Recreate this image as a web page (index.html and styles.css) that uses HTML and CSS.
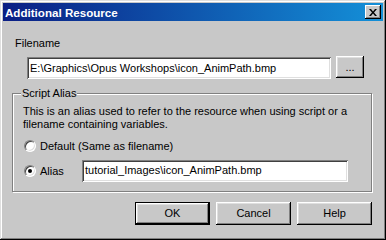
FILE: index.html
```html
<!DOCTYPE html>
<html>
<head>
<meta charset="utf-8">
<link rel="stylesheet" href="styles.css">
</head>
<body>
<div class="dialog">
  <div class="titlebar">
    <span class="title">Additional Resource</span>
    <div class="close">
      <svg width="8" height="7" viewBox="0 0 8 7"><path d="M0 0h2l2 2.5L6 0h2L5 3.5 8 7H6L4 4.5 2 7H0l3-3.5z" fill="#000"/></svg>
    </div>
  </div>
  <div class="label-filename">Filename</div>
  <div class="file-row">
    <div class="field file-field">E:\Graphics\Opus Workshops\icon_AnimPath.bmp</div>
    <div class="btn browse">...</div>
  </div>
  <div class="group">
    <div class="legend">Script Alias</div>
    <div class="desc">This is an alias used to refer to the resource when using script or a filename containing variables.</div>
    <div class="radio-row first">
      <span class="radio"></span>
      <span class="radio-label">Default (Same as filename)</span>
    </div>
    <div class="radio-row second">
      <span class="radio checked"></span>
      <span class="radio-label alias-label">Alias</span>
      <div class="field alias-field">tutorial_Images\icon_AnimPath.bmp</div>
    </div>
  </div>
  <div class="buttons">
    <div class="btn push default">OK</div>
    <div class="btn push">Cancel</div>
    <div class="btn push">Help</div>
  </div>
</div>
</body>
</html>
```

FILE: styles.css
```css
html, body {
  margin: 0;
  padding: 0;
  background: #c8c8c8;
}
.dialog {
  width: 386px;
  height: 240px;
  box-sizing: border-box;
  padding: 3px;
  background: #c8c8c8;
  box-shadow: inset -1px -1px #000, inset 1px 1px #dfdfdf, inset -2px -2px #808080, inset 2px 2px #fff;
  font-family: "Liberation Sans", Arial, sans-serif;
  font-size: 11px;
  line-height: 13px;
  color: #000;
}
.titlebar {
  height: 18px;
  display: flex;
  align-items: center;
  justify-content: space-between;
  padding: 0 2px 0 2px;
  background: linear-gradient(to right, #0a1e84, #1490d8);
}
.title {
  color: #fff;
  font-weight: bold;
  font-size: 11.6px;
}
.close {
  width: 16px;
  height: 14px;
  box-sizing: border-box;
  background: #c8c8c8;
  box-shadow: inset -1px -1px #000, inset 1px 1px #fff, inset -2px -2px #808080;
  display: flex;
  align-items: center;
  justify-content: center;
}
.close svg { display: block; margin-left: -1px; }
.label-filename {
  margin: 16px 0 0 12px;
}
.file-row {
  display: flex;
  gap: 5px;
  margin: 7px 0 0 24px;
}
.field {
  box-sizing: border-box;
  height: 22px;
  background: #fff;
  box-shadow: inset 1px 1px #808080, inset -1px -1px #fff, inset 2px 2px #404040, inset -2px -2px #dfdfdf;
  padding: 4px 3px 0 3px;
  white-space: nowrap;
  overflow: hidden;
}
.file-field {
  width: 304px;
  padding-top: 5px;
}
.btn {
  box-sizing: border-box;
  background: #c8c8c8;
  box-shadow: inset -1px -1px #000, inset 1px 1px #fff, inset -2px -2px #808080, inset 2px 2px #dfdfdf;
  display: flex;
  align-items: center;
  justify-content: center;
}
.browse {
  width: 28px;
  height: 22px;
  margin-top: -1px;
}
.group {
  position: relative;
  box-sizing: border-box;
  width: 360px;
  margin: 14px 0 0 9px;
  border: 1px solid #808080;
  box-shadow: inset 1px 1px #fff, 1px 1px #fff;
  padding: 11px 0 9px 10px;
}
.legend {
  position: absolute;
  top: -7px;
  left: 8px;
  padding: 0 1px;
  background: #c8c8c8;
}
.desc {
  width: 330px;
}
.radio-row {
  display: flex;
  align-items: center;
  margin-left: 1px;
}
.radio-row.first {
  height: 14px;
  margin-top: 8px;
}
.radio-row.second {
  height: 22px;
  margin-top: 7px;
}
.radio {
  width: 12px;
  height: 12px;
  box-sizing: border-box;
  border-radius: 50%;
  background: #fff;
  border: 1px solid;
  border-color: #808080 #fff #fff #808080;
  box-shadow: inset 1px 1px #404040, inset -1px -1px #dfdfdf;
  position: relative;
  flex: none;
}
.radio.checked::after {
  content: "";
  position: absolute;
  left: 3px;
  top: 3px;
  width: 4px;
  height: 4px;
  border-radius: 50%;
  background: #000;
}
.radio-label {
  margin-left: 4px;
}
.alias-label {
  width: 42px;
}
.alias-field {
  width: 266px;
}
.buttons {
  display: flex;
  justify-content: flex-end;
  gap: 6px;
  margin: 10px 11px 0 0;
}
.push {
  width: 75px;
  height: 23px;
}
.push.default {
  box-shadow: inset 0 0 0 1px #000, inset -2px -2px #000, inset 2px 2px #fff, inset -3px -3px #808080, inset 3px 3px #dfdfdf;
}
```
